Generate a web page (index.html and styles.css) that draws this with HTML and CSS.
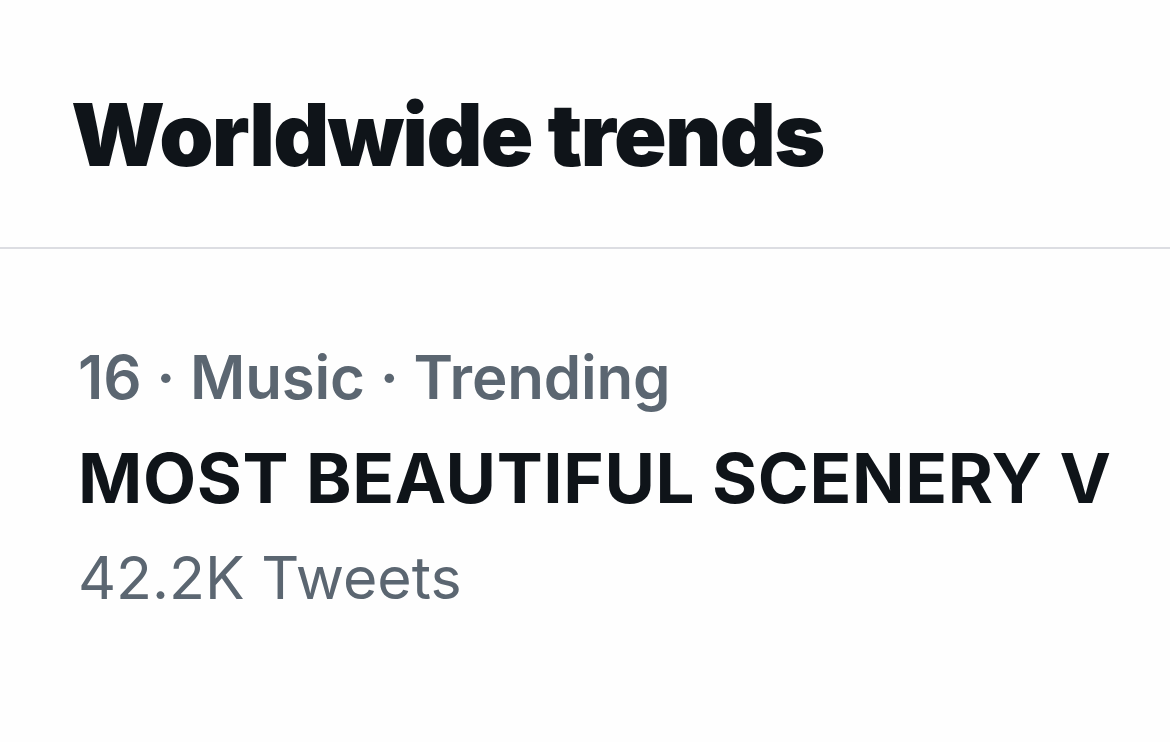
FILE: index.html
```html
<!DOCTYPE html>
<html>
<head>
<meta charset="utf-8">
<link rel="stylesheet" href="styles.css">
</head>
<body>
<div class="page">
  <header class="header">
    <h1 class="title">Worldwide trends</h1>
  </header>
  <section class="trend">
    <div class="meta">16 · Music · Trending</div>
    <div class="name">MOST BEAUTIFUL SCENERY V</div>
    <div class="count">42.2K Tweets</div>
  </section>
</div>
</body>
</html>
```

FILE: styles.css
```css
html, body {
  margin: 0;
  padding: 0;
  background: #fefefe;
}
body {
  width: 1170px;
  height: 742px;
  overflow: hidden;
  font-family: Inter, "Liberation Sans", sans-serif;
}
.header {
  height: 249px;
  border-bottom: 2px solid #dcdde2;
  box-sizing: border-box;
  padding: 85px 0 0 71px;
}
.title {
  margin: 0;
  font-size: 87px;
  font-weight: 880;
  line-height: 100px;
  color: #0f1419;
  letter-spacing: -1.7px;
}
.trend {
  padding: 92px 0 0 78px;
}
.meta {
  font-size: 60px;
  font-weight: 600;
  line-height: 72px;
  color: #5b6671;
  letter-spacing: -0.2px;
}
.name {
  margin-top: 15px;
  font-size: 69px;
  font-weight: 650;
  line-height: 100px;
  color: #0f1419;
  letter-spacing: 0.6px;
}
.count {
  margin-top: 5px;
  font-size: 59px;
  font-weight: 400;
  line-height: 90px;
  color: #5b6671;
}
```
